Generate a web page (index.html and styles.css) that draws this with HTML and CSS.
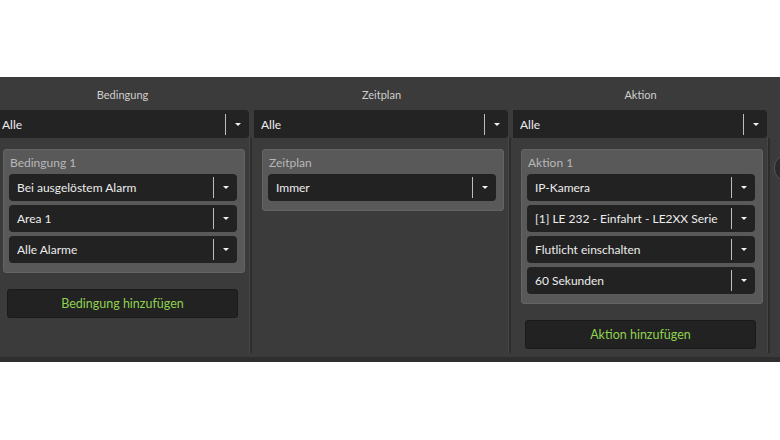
FILE: index.html
```html
<!DOCTYPE html>
<html lang="de">
<head>
    <meta charset="UTF-8">
    <meta name="viewport" content="width=device-width, initial-scale=1.0">
    <title>Regeln</title>
    <link rel="stylesheet" href="styles.css">
</head>
<body>
    <div class="panel">
        <div class="columns">
            <div class="column">
                <div class="col-head">Bedingung</div>
                <div class="filter"><span>Alle</span><i class="caret"></i></div>
                <div class="col-body">
                    <div class="card">
                        <div class="card-title">Bedingung 1</div>
                        <div class="select"><span>Bei ausgelöstem Alarm</span><i class="caret"></i></div>
                        <div class="select"><span>Area 1</span><i class="caret"></i></div>
                        <div class="select"><span>Alle Alarme</span><i class="caret"></i></div>
                    </div>
                    <button class="add-btn">Bedingung hinzufügen</button>
                </div>
            </div>
            <div class="column">
                <div class="col-head">Zeitplan</div>
                <div class="filter"><span>Alle</span><i class="caret"></i></div>
                <div class="col-body">
                    <div class="card">
                        <div class="card-title">Zeitplan</div>
                        <div class="select"><span>Immer</span><i class="caret"></i></div>
                    </div>
                </div>
            </div>
            <div class="column">
                <div class="col-head">Aktion</div>
                <div class="filter"><span>Alle</span><i class="caret"></i></div>
                <div class="col-body">
                    <div class="card">
                        <div class="card-title">Aktion 1</div>
                        <div class="select"><span>IP-Kamera</span><i class="caret"></i></div>
                        <div class="select"><span>[1] LE 232 - Einfahrt - LE2XX Serie</span><i class="caret"></i></div>
                        <div class="select"><span>Flutlicht einschalten</span><i class="caret"></i></div>
                        <div class="select"><span>60 Sekunden</span><i class="caret"></i></div>
                    </div>
                    <button class="add-btn">Aktion hinzufügen</button>
                </div>
            </div>
            <div class="column">
                <div class="col-head"></div>
                <div class="filter-empty"></div>
                <div class="col-body">
                    <div class="round-btn"></div>
                </div>
            </div>
        </div>
        <div class="panel-foot"></div>
    </div>
</body>
</html>
```

FILE: styles.css
```css
body {
    margin: 0;
    background: #fff;
    font-family: 'Lato', 'DejaVu Sans', sans-serif;
    overflow: hidden;
}
.panel {
    margin-top: 77px;
    height: 285px;
    background: #3b3b3b;
    overflow: hidden;
}
.columns {
    display: flex;
    margin-left: -7px;
    height: 276px;
}
.column {
    flex: 0 0 259px;
    display: flex;
    flex-direction: column;
}
.col-head {
    height: 33px;
    line-height: 36px;
    text-align: center;
    font-size: 11px;
    color: #cfcfcf;
}
.filter,
.filter-empty {
    height: 28px;
    margin: 0 3px 0 2px;
}
.filter {
    display: flex;
    align-items: center;
    background: #232323;
    border-radius: 0 4px 4px 0;
    padding-left: 7px;
    color: #ececec;
    font-size: 12px;
}
.filter span,
.select span {
    flex: 1;
    white-space: nowrap;
    overflow: hidden;
}
.caret {
    flex: 0 0 23px;
    height: 21px;
    border-left: 1.5px solid #bdbdbd;
    position: relative;
}
.caret::after {
    content: "";
    position: absolute;
    left: 9px;
    top: 9px;
    border-left: 3px solid transparent;
    border-right: 3px solid transparent;
    border-top: 3px solid #f2f2f2;
}
.col-body {
    flex: 1;
    padding-top: 11px;
    border-right: 2px solid #2d2d2d;
    box-shadow: inset -1px 0 0 #464646;
}
.card {
    width: 228px;
    margin-left: 10px;
    padding: 5px 7px 9px 5px;
    background: #595959;
    border: 1px solid #646464;
    border-radius: 3px;
}
.card-title {
    height: 19px;
    line-height: 15px;
    font-size: 12px;
    color: #b8b8b8;
    padding-left: 1px;
}
.select {
    display: flex;
    align-items: center;
    height: 27px;
    margin-top: 4px;
    padding-left: 8px;
    background: #222;
    border-radius: 4px;
    color: #ececec;
    font-size: 12px;
}
.card-title + .select {
    margin-top: 0;
}
.add-btn {
    display: block;
    width: 231px;
    height: 29px;
    margin: 16px 0 0 14px;
    background: #222;
    border: 1px solid #1a1a1a;
    border-radius: 3px;
    color: #8fd14f;
    font-family: inherit;
    font-size: 12.5px;
    cursor: pointer;
}
.round-btn {
    width: 24px;
    height: 24px;
    margin: 6px 0 0 4px;
    border-radius: 12px;
    background: #2a2a2a;
    border: 1px solid #555;
}
.panel-foot {
    height: 4px;
    border-bottom: 5px solid #2e2e2e;
}
```
